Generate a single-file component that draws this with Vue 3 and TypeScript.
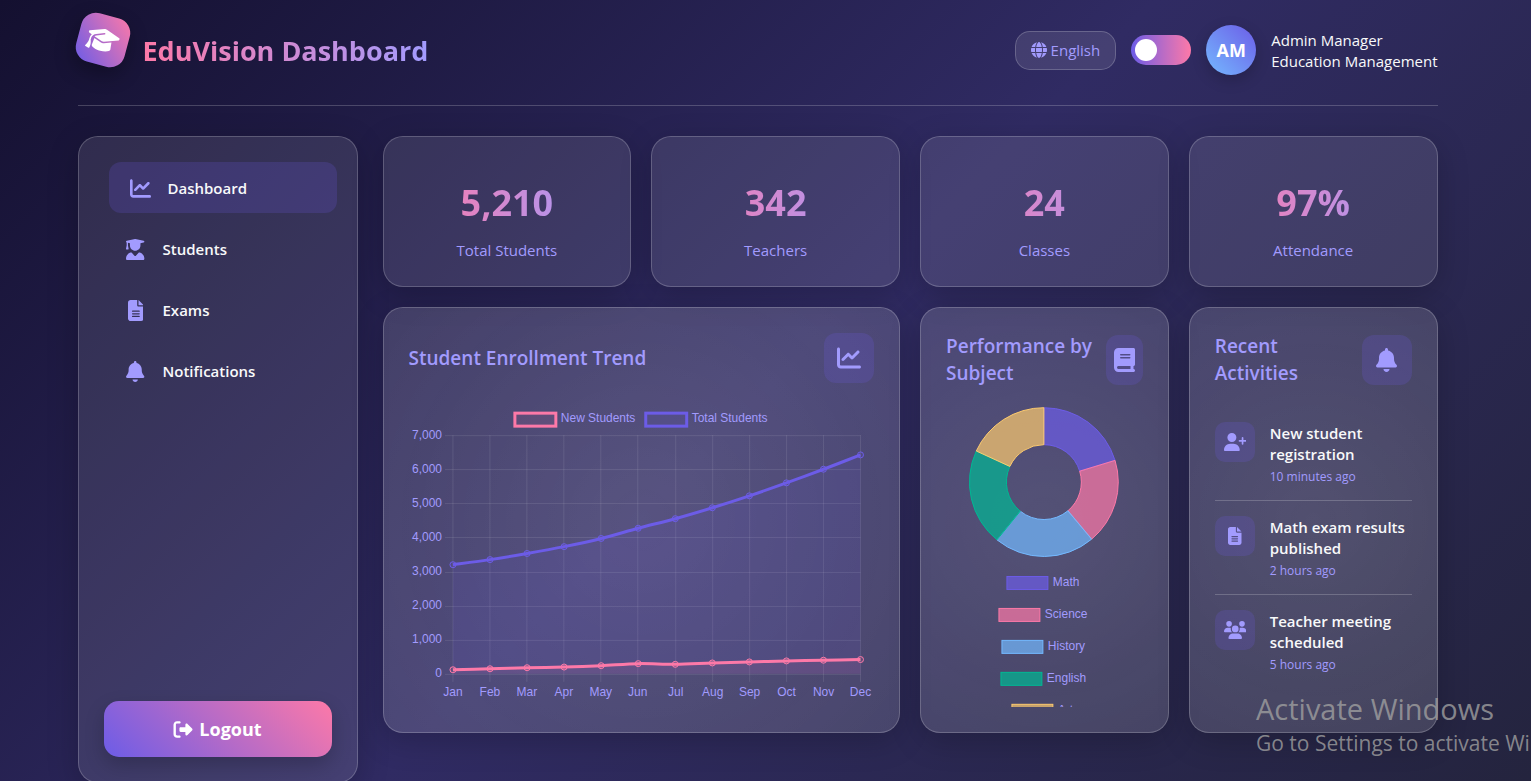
<script setup lang="ts">
import { computed, ref } from 'vue'

interface Icon {
  w: number
  d: string
}

const icons: Record<string, Icon> = {
  chart: {
    w: 512,
    d: 'M64 64c0-17.7-14.3-32-32-32S0 46.3 0 64V400c0 44.2 35.8 80 80 80H480c17.7 0 32-14.3 32-32s-14.3-32-32-32H80c-8.8 0-16-7.2-16-16V64zm406.6 86.6c12.5-12.5 12.5-32.8 0-45.3s-32.8-12.5-45.3 0L320 210.7l-57.4-57.4c-12.5-12.5-32.8-12.5-45.3 0l-112 112c-12.5 12.5-12.5 32.8 0 45.3s32.8 12.5 45.3 0L240 221.3l57.4 57.4c12.5 12.5 32.8 12.5 45.3 0l128-128z',
  },
  student: {
    w: 448,
    d: 'M219.3 .5c3.1-.6 6.3-.6 9.4 0l200 40C439.9 42.7 448 52.6 448 64s-8.1 21.3-19.3 23.5L352 102.9V160c0 70.7-57.3 128-128 128s-128-57.3-128-128V102.9L48 93.3v65.1l15.7 78.4c.9 4.7-.3 9.6-3.3 13.3s-7.6 5.9-12.4 5.9H16c-4.8 0-9.3-2.1-12.4-5.9s-4.3-8.6-3.3-13.3L16 158.4V86.6C6.5 83.3 0 74.3 0 64C0 52.6 8.1 42.7 19.3 40.5l200-40zM111.9 327.7c10.5-3.4 21.8 .4 29.4 8.5l71 75.5c6.3 6.7 17 6.7 23.3 0l71-75.5c7.6-8.1 18.9-11.9 29.4-8.5C401 348.6 448 409.4 448 481.3c0 17-13.8 30.7-30.7 30.7H30.7C13.8 512 0 498.2 0 481.3c0-71.9 47-132.7 111.9-153.6z',
  },
  file: {
    w: 384,
    d: 'M64 0C28.7 0 0 28.7 0 64V448c0 35.3 28.7 64 64 64H320c35.3 0 64-28.7 64-64V160H256c-17.7 0-32-14.3-32-32V0H64zM256 0V128H384L256 0zM112 256H272c8.8 0 16 7.2 16 16s-7.2 16-16 16H112c-8.8 0-16-7.2-16-16s7.2-16 16-16zm0 64H272c8.8 0 16 7.2 16 16s-7.2 16-16 16H112c-8.8 0-16-7.2-16-16s7.2-16 16-16zm0 64H272c8.8 0 16 7.2 16 16s-7.2 16-16 16H112c-8.8 0-16-7.2-16-16s7.2-16 16-16z',
  },
  bell: {
    w: 448,
    d: 'M224 0c-17.7 0-32 14.3-32 32V51.2C119 66 64 130.6 64 208v18.8c0 47-17.3 92.4-48.5 127.6l-7.4 8.3c-8.4 9.4-10.4 22.9-5.3 34.4S19.4 416 32 416H416c12.6 0 24-7.4 29.2-18.9s3.1-25-5.3-34.4l-7.4-8.3C401.3 319.2 384 273.9 384 226.8V208c0-77.4-55-142-128-156.8V32c0-17.7-14.3-32-32-32zm45.3 493.3c12-12 18.7-28.3 18.7-45.3H224 160c0 17 6.7 33.3 18.7 45.3s28.3 18.7 45.3 18.7s33.3-6.7 45.3-18.7z',
  },
  book: {
    w: 448,
    d: 'M96 0C43 0 0 43 0 96V416c0 53 43 96 96 96H384h32c17.7 0 32-14.3 32-32s-14.3-32-32-32V384c17.7 0 32-14.3 32-32V32c0-17.7-14.3-32-32-32H384 96zm0 384H352v64H96c-17.7 0-32-14.3-32-32s14.3-32 32-32zm32-240c0-8.8 7.2-16 16-16H336c8.8 0 16 7.2 16 16s-7.2 16-16 16H144c-8.8 0-16-7.2-16-16zm16 48H336c8.8 0 16 7.2 16 16s-7.2 16-16 16H144c-8.8 0-16-7.2-16-16s7.2-16 16-16z',
  },
  userPlus: {
    w: 640,
    d: 'M96 128a128 128 0 1 1 256 0A128 128 0 1 1 96 128zM0 482.3C0 383.8 79.8 304 178.3 304h91.4C368.2 304 448 383.8 448 482.3c0 16.4-13.3 29.7-29.7 29.7H29.7C13.3 512 0 498.7 0 482.3zM504 312V248H440c-13.3 0-24-10.7-24-24s10.7-24 24-24h64V136c0-13.3 10.7-24 24-24s24 10.7 24 24v64h64c13.3 0 24 10.7 24 24s-10.7 24-24 24H552v64c0 13.3-10.7 24-24 24s-24-10.7-24-24z',
  },
  users: {
    w: 640,
    d: 'M144 0a80 80 0 1 1 0 160A80 80 0 1 1 144 0zM512 0a80 80 0 1 1 0 160A80 80 0 1 1 512 0zM0 298.7C0 239.8 47.8 192 106.7 192h42.7c15.9 0 31 3.5 44.6 9.7c-1.3 7.2-1.9 14.7-1.9 22.3c0 38.2 16.8 72.5 43.3 96c-.2 0-.4 0-.7 0H21.3C9.6 320 0 310.4 0 298.7zM405.3 320c-.2 0-.4 0-.7 0c26.6-23.5 43.3-57.8 43.3-96c0-7.6-.7-15-1.9-22.3c13.6-6.3 28.7-9.7 44.6-9.7h42.7C592.2 192 640 239.8 640 298.7c0 11.8-9.6 21.3-21.3 21.3H405.3zM224 224a96 96 0 1 1 192 0 96 96 0 1 1 -192 0zM128 485.3C128 411.7 187.7 352 261.3 352H378.7C452.3 352 512 411.7 512 485.3c0 14.7-11.9 26.7-26.7 26.7H154.7c-14.7 0-26.7-11.9-26.7-26.7z',
  },
  logout: {
    w: 512,
    d: 'M377.9 105.9L500.7 228.7c7.2 7.2 11.3 17.1 11.3 27.3s-4.1 20.1-11.3 27.3L377.9 406.1c-6.4 6.4-15 9.9-24 9.9c-18.7 0-33.9-15.2-33.9-33.9l0-62.1-128 0c-17.7 0-32-14.3-32-32l0-64c0-17.7 14.3-32 32-32l128 0 0-62.1c0-18.7 15.2-33.9 33.9-33.9c9 0 17.6 3.6 24 9.9zM160 96L96 96c-17.7 0-32 14.3-32 32l0 256c0 17.7 14.3 32 32 32l64 0c17.7 0 32 14.3 32 32s-14.3 32-32 32l-64 0c-53 0-96-43-96-96L0 128C0 75 43 32 96 32l64 0c17.7 0 32 14.3 32 32s-14.3 32-32 32z',
  },
  cap: {
    w: 640,
    d: 'M320 32c-8.1 0-16.1 1.4-23.7 4.1L15.8 137.4C6.3 140.9 0 149.9 0 160s6.3 19.1 15.8 22.6l57.9 20.9C57.3 229.3 48 259.8 48 291.9v28.1c0 28.4-10.8 57.7-22.3 80.8c-6.5 13-13.9 25.8-22.5 37.6C0 442.7-.9 448.3 .9 453.4s6 8.9 11.2 10.2l64 16c4.2 1.1 8.7 .3 12.4-2s6.3-6.1 7.1-10.4c8.6-42.8 4.3-81.2-2.1-108.7C90.3 344.3 86 329.8 80 316.5V291.9c0-30.2 10.2-58.7 27.9-81.5c12.9-15.5 29.6-28 49.2-35.7l157-61.7c8.2-3.2 17.5 .8 20.7 9s-.8 17.5-9 20.7l-157 61.7c-12.4 4.9-23.3 12.4-32.2 21.6l159.6 57.6c7.6 2.7 15.6 4.1 23.7 4.1s16.1-1.4 23.7-4.1L624.2 182.6c9.5-3.4 15.8-12.5 15.8-22.6s-6.3-19.1-15.8-22.6L343.7 36.1C336.1 33.4 328.1 32 320 32zM128 408c0 35.3 86 72 192 72s192-36.7 192-72L496.7 262.6 354.5 314c-11.1 4-22.8 6-34.5 6s-23.5-2-34.5-6L143.3 262.6 128 408z',
  },
  globe: {
    w: 512,
    d: 'M352 256c0 22.2-1.2 43.6-3.3 64H163.3c-2.2-20.4-3.3-41.8-3.3-64s1.2-43.6 3.3-64H348.7c2.2 20.4 3.3 41.8 3.3 64zm28.8-64H503.9c5.3 20.5 8.1 41.9 8.1 64s-2.8 43.5-8.1 64H380.8c2.1-20.6 3.2-42 3.2-64s-1.1-43.4-3.2-64zm112.6-32H376.7c-10-63.9-29.8-117.4-55.3-151.6c78.3 20.7 142 77.5 171.9 151.6zm-149.1 0H167.7c6.1-36.4 15.5-68.6 27-94.7c10.5-23.6 22.2-40.7 33.5-51.5C239.4 3.2 248.7 0 256 0s16.6 3.2 27.8 13.8c11.3 10.8 23 27.9 33.5 51.5c11.6 26 20.9 58.2 27 94.7zm-209 0H18.6C48.6 85.9 112.2 29.1 190.6 8.4C165.1 42.6 145.3 96.1 135.3 160zM8.1 192H131.2c-2.1 20.6-3.2 42-3.2 64s1.1 43.4 3.2 64H8.1C2.8 299.5 0 278.1 0 256s2.8-43.5 8.1-64zM194.7 446.6c-11.6-26-20.9-58.2-27-94.6H344.3c-6.1 36.4-15.5 68.6-27 94.6c-10.5 23.6-22.2 40.7-33.5 51.5C272.6 508.8 263.3 512 256 512s-16.6-3.2-27.8-13.8c-11.3-10.8-23-27.9-33.5-51.5zM135.3 352c10 63.9 29.8 117.4 55.3 151.6C112.2 482.9 48.6 426.1 18.6 352H135.3zm358.1 0c-30 74.1-93.6 130.9-171.9 151.6c25.5-34.2 45.2-87.7 55.3-151.6H493.4z',
  },
}

const box = (name: string) => `0 0 ${icons[name].w} 512`

const lightTheme = ref(false)
const activeNav = ref('Dashboard')

const nav = [
  { label: 'Dashboard', icon: 'chart' },
  { label: 'Students', icon: 'student' },
  { label: 'Exams', icon: 'file' },
  { label: 'Notifications', icon: 'bell' },
]

const stats = [
  { value: '5,210', label: 'Total Students' },
  { value: '342', label: 'Teachers' },
  { value: '24', label: 'Classes' },
  { value: '97%', label: 'Attendance' },
]

const activities = [
  { title: 'New student registration', time: '10 minutes ago', icon: 'userPlus' },
  { title: 'Math exam results published', time: '2 hours ago', icon: 'file' },
  { title: 'Teacher meeting scheduled', time: '5 hours ago', icon: 'users' },
]

/* Line chart */
const months = ['Jan', 'Feb', 'Mar', 'Apr', 'May', 'Jun', 'Jul', 'Aug', 'Sep', 'Oct', 'Nov', 'Dec']
const newStudents = [120, 150, 180, 200, 240, 300, 280, 320, 350, 380, 400, 420]
const totalStudents = [3200, 3350, 3530, 3730, 3970, 4270, 4550, 4870, 5220, 5600, 6000, 6420]
const plot = { left: 44, right: 452, top: 32, bottom: 271, max: 7000 }

const px = (i: number) => plot.left + (i * (plot.right - plot.left)) / (months.length - 1)
const py = (v: number) => plot.bottom - (v / plot.max) * (plot.bottom - plot.top)

type Point = [number, number]

function smooth(points: Point[]): string {
  const t = 0.15
  let d = `M${points[0][0]} ${points[0][1]}`
  for (let i = 0; i < points.length - 1; i++) {
    const p0 = points[Math.max(0, i - 1)]
    const p1 = points[i]
    const p2 = points[i + 1]
    const p3 = points[Math.min(points.length - 1, i + 2)]
    d += `C${p1[0] + (p2[0] - p0[0]) * t} ${p1[1] + (p2[1] - p0[1]) * t} ${p2[0] - (p3[0] - p1[0]) * t} ${p2[1] - (p3[1] - p1[1]) * t} ${p2[0]} ${p2[1]}`
  }
  return d
}

const series = computed(() =>
  [
    { name: 'total', values: totalStudents },
    { name: 'new', values: newStudents },
  ].map((s) => {
    const points = s.values.map((v, i): Point => [px(i), py(v)])
    const line = smooth(points)
    return { name: s.name, points, line, area: `${line}V${plot.bottom}H${plot.left}Z` }
  }),
)

const ticks = [0, 1000, 2000, 3000, 4000, 5000, 6000, 7000].map((v) => ({
  label: v.toLocaleString('en-US'),
  y: Math.round(py(v)) + 0.5,
}))
const columns = months.map((m, i) => ({ label: m, x: Math.round(px(i)) }))

/* Doughnut chart */
const subjects = [
  { label: 'Math', score: 85, color: '#6c5ce7', x: 61 },
  { label: 'Science', score: 78, color: '#fd79a8', x: 53 },
  { label: 'History', score: 92, color: '#74b9ff', x: 56 },
  { label: 'English', score: 88, color: '#00b894', x: 55 },
  { label: 'Art', score: 76, color: '#fdcb6e', x: 66 },
]

const slices = computed(() => {
  const sum = subjects.reduce((a, s) => a + s.score, 0)
  const at = (r: number, a: number) => `${98 + r * Math.sin(a)} ${75 - r * Math.cos(a)}`
  let angle = 0
  return subjects.map((s) => {
    const from = angle
    angle += (s.score / sum) * Math.PI * 2
    return {
      color: s.color,
      d: `M${at(74.5, from)}A74.5 74.5 0 0 1 ${at(74.5, angle)}L${at(37.5, angle)}A37.5 37.5 0 0 0 ${at(37.5, from)}Z`,
    }
  })
})
</script>

<template>
  <div class="page">
    <div class="container">
      <header class="header">
        <div class="brand">
          <div class="logo">
            <svg class="logo-icon" :viewBox="box('cap')" aria-hidden="true"><path :d="icons.cap.d" /></svg>
          </div>
          <h1 class="brand-title">EduVision Dashboard</h1>
        </div>
        <div class="tools">
          <button class="language" type="button">
            <svg class="language-icon" :viewBox="box('globe')" aria-hidden="true"><path :d="icons.globe.d" /></svg>
            English
          </button>
          <input v-model="lightTheme" class="switch" type="checkbox" aria-label="Light theme" />
          <div class="avatar">AM</div>
          <div class="user">
            <div>Admin Manager</div>
            <div>Education Management</div>
          </div>
        </div>
      </header>

      <div class="layout">
        <aside class="panel sidebar">
          <nav class="nav">
            <a
              v-for="item in nav"
              :key="item.label"
              href="#"
              class="nav-link"
              :class="{ active: item.label === activeNav }"
              @click.prevent="activeNav = item.label"
            >
              <span class="nav-icon">
                <svg :viewBox="box(item.icon)" aria-hidden="true"><path :d="icons[item.icon].d" /></svg>
              </span>
              {{ item.label }}
            </a>
          </nav>
          <button class="logout" type="button">
            <svg class="logout-icon" :viewBox="box('logout')" aria-hidden="true"><path :d="icons.logout.d" /></svg>
            Logout
          </button>
        </aside>

        <main class="content">
          <section v-for="s in stats" :key="s.label" class="panel stat">
            <div class="stat-value">{{ s.value }}</div>
            <div class="stat-label">{{ s.label }}</div>
          </section>

          <section class="panel card wide">
            <div class="card-head">
              <h2 class="card-title">Student Enrollment Trend</h2>
              <div class="card-icon">
                <svg :viewBox="box('chart')" aria-hidden="true"><path :d="icons.chart.d" /></svg>
              </div>
            </div>
            <svg class="chart" viewBox="0 0 466 300" role="img" aria-label="Student enrollment by month">
              <rect class="key new" x="106" y="10" width="41" height="13" />
              <text x="152" y="19">New Students</text>
              <rect class="key total" x="237" y="10" width="41" height="13" />
              <text x="283" y="19">Total Students</text>
              <g class="grid">
                <line v-for="t in ticks" :key="t.label" x1="36" :x2="plot.right" :y1="t.y" :y2="t.y" />
                <line v-for="c in columns" :key="c.label" :x1="c.x" :x2="c.x" :y1="plot.top" y2="279" />
              </g>
              <g v-for="s in series" :key="s.name" :class="['series', s.name]">
                <path class="area" :d="s.area" />
                <path class="line" :d="s.line" />
                <circle v-for="(p, i) in s.points" :key="i" class="dot" :cx="p[0]" :cy="p[1]" r="3" />
              </g>
              <text v-for="t in ticks" :key="t.label" class="end" x="33" :y="t.y + 3">{{ t.label }}</text>
              <text v-for="c in columns" :key="c.label" class="mid" :x="c.x" y="293">{{ c.label }}</text>
            </svg>
          </section>

          <section class="panel card">
            <div class="card-head">
              <h2 class="card-title">Performance by Subject</h2>
              <div class="card-icon slim">
                <svg :viewBox="box('book')" aria-hidden="true"><path :d="icons.book.d" /></svg>
              </div>
            </div>
            <svg class="chart" viewBox="0 0 197 300" role="img" aria-label="Performance by subject">
              <path v-for="s in slices" :key="s.color" class="slice" :d="s.d" :fill="s.color" :stroke="s.color" />
              <g v-for="(s, i) in subjects" :key="s.label">
                <rect
                  class="slice"
                  :x="s.x"
                  :y="169.5 + i * 32"
                  width="41"
                  height="13"
                  :fill="s.color"
                  :stroke="s.color"
                />
                <text :x="s.x + 46" :y="179 + i * 32">{{ s.label }}</text>
              </g>
            </svg>
          </section>

          <section class="panel card">
            <div class="card-head">
              <h2 class="card-title">Recent Activities</h2>
              <div class="card-icon">
                <svg :viewBox="box('bell')" aria-hidden="true"><path :d="icons.bell.d" /></svg>
              </div>
            </div>
            <ul class="activities">
              <li v-for="a in activities" :key="a.title" class="activity">
                <div class="activity-icon">
                  <svg :viewBox="box(a.icon)" aria-hidden="true"><path :d="icons[a.icon].d" /></svg>
                </div>
                <div class="activity-text">
                  <div class="activity-title">{{ a.title }}</div>
                  <div class="activity-time">{{ a.time }}</div>
                </div>
              </li>
            </ul>
          </section>
        </main>
      </div>
    </div>

    <div class="watermark">
      <div class="watermark-title">Activate Windows</div>
      <div class="watermark-text">Go to Settings to activate Windows.</div>
    </div>
  </div>
</template>

<style>
body {
  margin: 0;
  background: #24243e;
}
</style>

<style scoped>
* {
  box-sizing: border-box;
}

svg {
  fill: currentColor;
}

.page {
  position: relative;
  height: 100vh;
  overflow: hidden;
  padding: 25px 36px 0 20px;
  background: linear-gradient(135deg, #141030, #302b63, #24243e);
  color: #f8f9fa;
  font-family: 'Segoe UI', 'Open Sans', 'Noto Sans', sans-serif;
  font-size: 15px;
  line-height: 21px;
}

.container {
  max-width: 1360px;
  margin: 0 auto;
}

.header {
  display: flex;
  align-items: center;
  justify-content: space-between;
  padding-bottom: 30px;
  margin-bottom: 30px;
  border-bottom: 1px solid rgba(255, 255, 255, 0.2);
}

.brand {
  display: flex;
  align-items: center;
  gap: 15px;
}

.logo {
  display: flex;
  align-items: center;
  justify-content: center;
  width: 50px;
  height: 50px;
  border-radius: 15px;
  background: linear-gradient(45deg, #6c5ce7, #fd79a8);
  box-shadow: 0 8px 20px rgba(0, 0, 0, 0.3);
  color: #fff;
  transform: translateY(-10px) rotate(15deg);
}

.logo-icon {
  width: 32px;
  height: 26px;
}

.brand-title {
  margin: 0;
  padding-top: 2px;
  background: linear-gradient(90deg, #fd79a8, #a29bfe);
  background-clip: text;
  color: transparent;
  font-size: 27px;
  font-weight: 700;
  line-height: 38px;
}

.tools {
  display: flex;
  align-items: center;
  gap: 15px;
}

.language {
  display: flex;
  align-items: center;
  gap: 4px;
  padding: 8px 15px;
  border: 1px solid rgba(255, 255, 255, 0.2);
  border-radius: 15px;
  background: rgba(255, 255, 255, 0.1);
  color: #a29bfe;
  font: inherit;
}

.language-icon {
  width: 16px;
  height: 16px;
}

.switch {
  appearance: none;
  display: flex;
  align-items: center;
  width: 60px;
  height: 30px;
  margin: 0;
  padding: 0 4px;
  border-radius: 15px;
  background: linear-gradient(90deg, #6c5ce7, #fd79a8);
}

.switch::before {
  content: '';
  width: 22px;
  height: 22px;
  border-radius: 50%;
  background: #fff;
}

.switch:checked {
  justify-content: flex-end;
}

.avatar {
  display: flex;
  align-items: center;
  justify-content: center;
  width: 50px;
  height: 50px;
  border-radius: 50%;
  background: linear-gradient(45deg, #74b9ff, #6c5ce7);
  box-shadow: 0 5px 15px rgba(0, 0, 0, 0.2);
  color: #fff;
  font-size: 18px;
  font-weight: 700;
}

.user {
  padding-top: 2px;
}

.layout {
  display: grid;
  grid-template-columns: 280px minmax(0, 1fr);
  align-items: start;
  gap: 25px;
}

.panel {
  padding: 25px;
  border: 1px solid rgba(255, 255, 255, 0.2);
  border-radius: 20px;
  background: rgba(255, 255, 255, 0.1);
  box-shadow: 0 8px 32px rgba(0, 0, 0, 0.2);
}

.sidebar {
  display: flex;
  flex-direction: column;
  min-height: calc(100vh - 134px);
}

.nav {
  display: flex;
  flex-direction: column;
  gap: 10px;
}

.nav-link {
  display: flex;
  align-items: center;
  gap: 15px;
  padding: 16px 20px 14px;
  border-radius: 12px;
  color: #f8f9fa;
  font-weight: 600;
  text-decoration: none;
}

.nav-link.active {
  background: rgba(108, 92, 231, 0.2);
  transform: translateX(5px);
}

.nav-icon {
  display: flex;
  justify-content: center;
  width: 24px;
  color: #a29bfe;
}

.nav-icon svg {
  height: 21px;
}

.logout {
  display: flex;
  align-items: center;
  justify-content: center;
  gap: 6px;
  height: 56px;
  margin-top: auto;
  border: 0;
  border-radius: 15px;
  background: linear-gradient(45deg, #6c5ce7, #fd79a8);
  box-shadow: 0 8px 20px rgba(0, 0, 0, 0.2);
  color: #fff;
  font: inherit;
  font-size: 18px;
  font-weight: 700;
}

.logout-icon {
  width: 20px;
  height: 19px;
}

.content {
  display: grid;
  grid-template-columns: repeat(4, minmax(0, 1fr));
  gap: 20px;
}

.stat {
  text-align: center;
}

.stat-value {
  margin: 17px 0 14px;
  background: linear-gradient(90deg, #fd79a8, #a29bfe);
  background-clip: text;
  color: transparent;
  font-size: 36px;
  font-weight: 700;
  line-height: 47px;
}

.stat-label {
  color: #a29bfe;
}

.card {
  background:
    radial-gradient(circle, rgba(255, 255, 255, 0.1), rgba(255, 255, 255, 0.04)),
    rgba(255, 255, 255, 0.1);
}

.wide {
  grid-column: span 2;
}

.card-head {
  display: flex;
  align-items: center;
  justify-content: space-between;
  margin-bottom: 20px;
}

.card-title {
  margin: 0;
  color: #a29bfe;
  font-size: 19px;
  font-weight: 600;
  line-height: 27px;
}

.card-icon {
  display: flex;
  flex: none;
  align-items: center;
  justify-content: center;
  width: 50px;
  height: 50px;
  border-radius: 12px;
  background: rgba(108, 92, 231, 0.2);
  color: #a29bfe;
}

.card-icon.slim {
  width: 37px;
}

.card-icon svg {
  height: 24px;
}

.chart {
  display: block;
  width: 100%;
  height: 300px;
}

.chart text {
  fill: #a29bfe;
  font-family: 'Liberation Sans', Arial, sans-serif;
  font-size: 12px;
}

.chart .end {
  text-anchor: end;
}

.chart .mid {
  text-anchor: middle;
}

.grid line {
  stroke: rgba(255, 255, 255, 0.1);
}

.key {
  stroke-width: 3;
}

.new {
  fill: rgba(253, 121, 168, 0.1);
  stroke: #fd79a8;
}

.total {
  fill: rgba(108, 92, 231, 0.1);
  stroke: #6c5ce7;
}

.area {
  stroke: none;
}

.line {
  fill: none;
  stroke-width: 3;
}

.slice {
  fill-opacity: 0.7;
}

.activities {
  margin: 0;
  padding: 0;
  list-style: none;
}

.activity {
  display: flex;
  align-items: flex-start;
  gap: 15px;
  padding: 15px 0;
  border-bottom: 1px solid rgba(255, 255, 255, 0.2);
}

.activity:last-child {
  border-bottom: 0;
}

.activity-icon {
  display: flex;
  flex: none;
  align-items: center;
  justify-content: center;
  width: 40px;
  height: 40px;
  border-radius: 10px;
  background: rgba(108, 92, 231, 0.2);
  color: #a29bfe;
}

.activity-icon svg {
  height: 18px;
}

.activity-text {
  padding-top: 1px;
}

.activity-title {
  margin-bottom: 4px;
  font-weight: 600;
}

.activity-time {
  color: #a29bfe;
  font-size: 12px;
  line-height: 16px;
}

.watermark {
  position: absolute;
  top: 689px;
  left: 1256px;
  color: rgba(160, 160, 160, 0.8);
  white-space: nowrap;
  pointer-events: none;
}

.watermark-title {
  font-size: 29px;
  line-height: 40px;
}

.watermark-text {
  font-size: 21px;
  line-height: 28px;
}
</style>
